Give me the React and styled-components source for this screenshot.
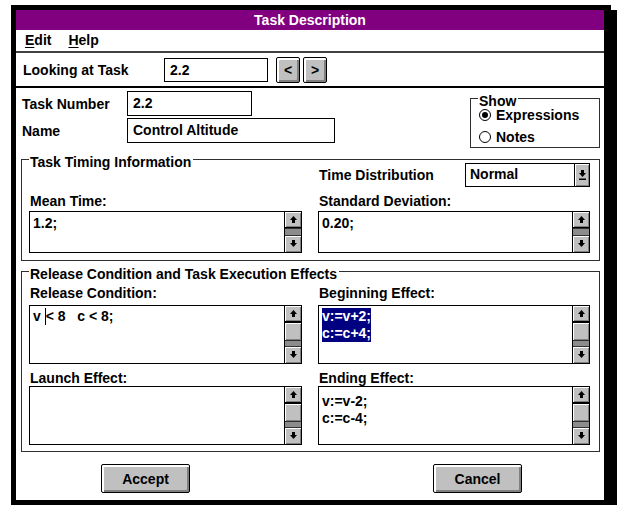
import React from 'react';
import styled, { createGlobalStyle } from 'styled-components';

const GlobalStyle = createGlobalStyle`
  html, body {
    margin: 0;
    padding: 0;
    background: #ffffff;
  }
  body {
    font-family: "Liberation Sans", Arial, sans-serif;
    font-size: 14px;
    font-weight: bold;
    line-height: 16px;
    color: #000000;
  }
`;

const Window = styled.div`
  box-sizing: border-box;
  width: 600px;
  height: 500px;
  margin: 5px 0 0 11px;
  border: 5px solid #000;
  border-right-width: 7px;
  box-shadow: 6px 5px 0 #000;
  background: #fff;
  display: flex;
  flex-direction: column;
`;

const TitleBar = styled.div`
  height: 20px;
  line-height: 20px;
  background: #800080;
  color: #fff;
  text-align: center;
`;

const MenuBar = styled.div`
  height: 21px;
  box-sizing: border-box;
  padding: 2px 9px 0;
  display: flex;
  gap: 17px;
  border-bottom: 2px solid #404040;
  height: 23px;

  u {
    text-underline-offset: 2px;
  }
`;

const LookingRow = styled.div`
  height: 35px;
  box-sizing: border-box;
  display: flex;
  align-items: center;
  padding-left: 6px;
  border-bottom: 2px solid #000;
`;

const Label = styled.span`
  display: inline-block;
  box-sizing: border-box;
  width: ${(p) => p.$w || 'auto'};
  padding-left: 1px;
`;

const TextBox = styled.div`
  box-sizing: border-box;
  width: ${(p) => p.$w}px;
  height: ${(p) => p.$h || 25}px;
  line-height: ${(p) => (p.$h || 25) - 2}px;
  border: 1px solid #000;
  padding-left: 5px;
  background: #fff;
`;

const NavGroup = styled.div`
  display: flex;
  gap: 3px;
  margin-left: 8px;
`;

const PushButton = styled.div`
  box-sizing: border-box;
  width: ${(p) => p.$w}px;
  height: ${(p) => p.$h}px;
  display: flex;
  align-items: center;
  justify-content: center;
  background: #c0c0c0;
  border: 1px solid #000;
  border-radius: 2px;
  box-shadow: inset 1px 1px 0 #fff, inset 2px 2px 0 #fff, inset -1px -1px 0 #808080, inset -2px -2px 0 #808080;
`;

const Main = styled.div`
  flex: 1;
  display: flex;
  flex-direction: column;
  padding: 0 4px 0 5px;
`;

const TopSection = styled.div`
  display: flex;
  justify-content: space-between;
  align-items: flex-start;
  padding-top: 3px;
`;

const FieldStack = styled.div`
  display: flex;
  flex-direction: column;
  gap: 2px;
`;

const FieldRow = styled.div`
  display: flex;
  align-items: center;
`;

const GroupBox = styled.div`
  position: relative;
  border: 1px solid #303030;
  margin-top: ${(p) => p.$mt || 0}px;
  margin-right: ${(p) => p.$mr || 0}px;
  padding: ${(p) => p.$pad};
  width: ${(p) => (p.$w ? `${p.$w}px` : 'auto')};
  box-sizing: border-box;
`;

const Legend = styled.span`
  position: absolute;
  top: -6px;
  left: 7px;
  padding: 0 2px 0 1px;
  background: #fff;
  line-height: 16px;
  white-space: nowrap;
`;

const RadioList = styled.div`
  display: flex;
  flex-direction: column;
  gap: 6px;
`;

const RadioRow = styled.div`
  display: flex;
  align-items: center;
  gap: 5px;
  height: 16px;
`;

const RadioDot = styled.span`
  box-sizing: border-box;
  width: 12px;
  height: 12px;
  border-radius: 50%;
  border: 1px solid #000;
  display: flex;
  align-items: center;
  justify-content: center;

  &::after {
    content: '';
    display: ${(p) => (p.$on ? 'block' : 'none')};
    width: 6px;
    height: 6px;
    border-radius: 50%;
    background: #000;
  }
`;

const TimingGrid = styled.div`
  display: grid;
  grid-template-columns: 273px 272px;
  grid-template-rows: 24px 22px 44px;
  column-gap: 16px;
  align-items: end;
`;

const EffectsGrid = styled.div`
  display: grid;
  grid-template-columns: 273px 272px;
  grid-template-rows: 16px 63px 22px 59px;
  column-gap: 16px;
  align-items: end;
`;

const DistRow = styled.div`
  display: flex;
  align-items: center;
  justify-content: space-between;
  height: 24px;
  padding-left: 1px;
`;

const Combo = styled.div`
  box-sizing: border-box;
  width: 125px;
  height: 24px;
  border: 1px solid #000;
  display: flex;
`;

const ComboText = styled.div`
  flex: 1;
  padding-left: 4px;
  line-height: 20px;
`;

const ComboButton = styled.div`
  width: 14px;
  background: #c0c0c0;
  border-left: 1px solid #000;
  display: flex;
  align-items: center;
  justify-content: center;
  box-shadow: inset 1px 1px 0 #fff, inset -1px -1px 0 #808080;
`;

const EditArea = styled.div`
  box-sizing: border-box;
  height: ${(p) => p.$h}px;
  border: 1px solid #000;
  display: flex;
  background: #fff;
`;

const EditText = styled.div`
  flex: 1;
  padding: ${(p) => p.$pt || 2}px 3px 0 3px;
  line-height: 17px;
  white-space: pre;
`;

const Caret = styled.span`
  display: inline-block;
  width: 1px;
  height: 17px;
  background: #000;
  vertical-align: -4px;
`;

const Selected = styled.span`
  display: inline-block;
  background: #000080;
  color: #fff;
  line-height: 17px;
`;

const ScrollBar = styled.div`
  width: 16px;
  border-left: 1px solid #000;
  display: flex;
  flex-direction: column;
`;

const ArrowButton = styled.div`
  box-sizing: border-box;
  height: 16px;
  background: #c0c0c0;
  display: flex;
  align-items: center;
  justify-content: center;
  box-shadow: inset 1px 1px 0 #fff, inset -1px -1px 0 #808080;
`;

const Thumb = styled.div`
  box-sizing: border-box;
  height: 18px;
  background: #c0c0c0;
  border-top: 1px solid #000;
  box-shadow: inset 1px 1px 0 #fff, inset -1px -1px 0 #808080;
`;

const Track = styled.div`
  flex: 1;
  background: #8c8c8c;
  border-top: 1px solid #303030;
  border-bottom: 1px solid #303030;
`;

const ButtonRow = styled.div`
  display: flex;
  justify-content: space-between;
  padding: 0 78px 0 80px;
  margin-top: 12px;
`;

const Arrow = ({ down, bar }) => (
  <svg width="7" height={bar ? 10 : 8} viewBox={`0 0 7 ${bar ? 10 : 8}`}>
    <polygon
      points={down ? '2,0 5,0 5,3 7,3 3.5,7 0,3 2,3' : '3.5,0 7,4 5,4 5,7 2,7 2,4 0,4'}
      fill="#000"
    />
    {bar && <rect x="0" y="8.5" width="7" height="1.5" fill="#000" />}
  </svg>
);

const Scroller = ({ thumb }) => (
  <ScrollBar>
    <ArrowButton style={{ borderBottom: '1px solid #000' }}>
      <Arrow />
    </ArrowButton>
    {thumb && <Thumb />}
    <Track />
    <ArrowButton>
      <Arrow down />
    </ArrowButton>
  </ScrollBar>
);

const Edit = ({ h, pt, thumb, children }) => (
  <EditArea $h={h}>
    <EditText $pt={pt}>{children}</EditText>
    <Scroller thumb={thumb} />
  </EditArea>
);

export default function App() {
  return (
    <>
      <GlobalStyle />
      <Window>
        <TitleBar>Task Description</TitleBar>
        <MenuBar>
          <span>
            <u>E</u>dit
          </span>
          <span>
            <u>H</u>elp
          </span>
        </MenuBar>

        <LookingRow>
          <Label $w="142px">Looking at Task</Label>
          <TextBox $w={104} $h={24}>2.2</TextBox>
          <NavGroup>
            <PushButton $w={24} $h={26}>&lt;</PushButton>
            <PushButton $w={24} $h={26}>&gt;</PushButton>
          </NavGroup>
        </LookingRow>

        <Main>
          <TopSection>
            <FieldStack>
              <FieldRow>
                <Label $w="106px">Task Number</Label>
                <TextBox $w={125}>2.2</TextBox>
              </FieldRow>
              <FieldRow>
                <Label $w="106px">Name</Label>
                <TextBox $w={208}>Control Altitude</TextBox>
              </FieldRow>
            </FieldStack>
            <GroupBox $w={130} $mt={7} $pad="8px 0 2px 8px">
              <Legend>Show</Legend>
              <RadioList>
                <RadioRow>
                  <RadioDot $on />
                  Expressions
                </RadioRow>
                <RadioRow>
                  <RadioDot />
                  Notes
                </RadioRow>
              </RadioList>
            </GroupBox>
          </TopSection>

          <GroupBox $mt={11} $pad="3px 9px 7px 7px">
            <Legend>Task Timing Information</Legend>
            <TimingGrid>
              <div />
              <DistRow>
                <span>Time Distribution</span>
                <Combo>
                  <ComboText>Normal</ComboText>
                  <ComboButton>
                    <Arrow down bar />
                  </ComboButton>
                </Combo>
              </DistRow>
              <Label>Mean Time:</Label>
              <Label>Standard Deviation:</Label>
              <Edit h={42} pt={3}>1.2;</Edit>
              <Edit h={42} pt={3}>0.20;</Edit>
            </TimingGrid>
          </GroupBox>

          <GroupBox $mt={10} $pad="13px 9px 6px 7px">
            <Legend>Release Condition and Task Execution Effects</Legend>
            <EffectsGrid>
              <Label>Release Condition:</Label>
              <Label>Beginning Effect:</Label>
              <Edit h={59} thumb>
                {'v '}
                <Caret />
                {'< 8   c < 8;'}
              </Edit>
              <Edit h={59} thumb>
                <div>
                  <Selected>v:=v+2;</Selected>
                </div>
                <div>
                  <Selected>c:=c+4;</Selected>
                </div>
              </Edit>
              <Label>Launch Effect:</Label>
              <Label>Ending Effect:</Label>
              <Edit h={59} thumb />
              <Edit h={59} thumb pt={6}>
                <div>v:=v-2;</div>
                <div>c:=c-4;</div>
              </Edit>
            </EffectsGrid>
          </GroupBox>

          <ButtonRow>
            <PushButton $w={89} $h={29}>Accept</PushButton>
            <PushButton $w={89} $h={29}>Cancel</PushButton>
          </ButtonRow>
        </Main>
      </Window>
    </>
  );
}
